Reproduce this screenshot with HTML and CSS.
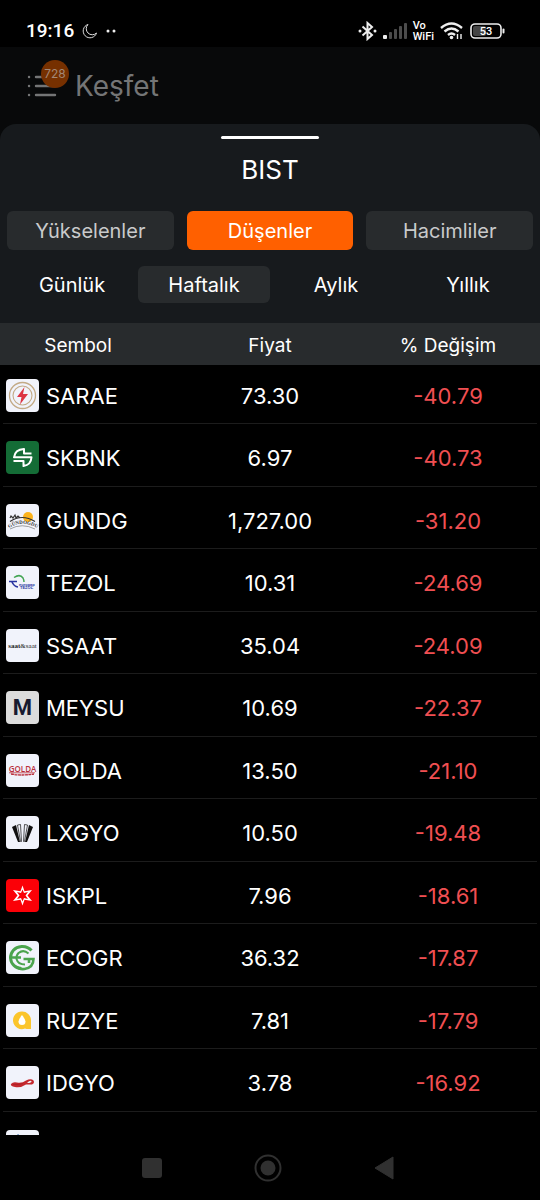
FILE: index.html
```
<!DOCTYPE html>
<html lang="tr">
<head>
  <meta charset="utf-8">
  <meta name="viewport" content="width=device-width, initial-scale=1">
  <title>Keşfet - BIST</title>
  <link rel="stylesheet" href="styles.css">
</head>
<body>
  <div class="statusBar">
    <span class="clock">19:16</span>
    <svg class="moon" width="16" height="16" viewBox="0 0 16 16"><path d="M6 1.500A6.800 6.800 0 1 0 14.500 10A6 6 0 0 1 6 1.500Z" fill="none" stroke="#ddd" stroke-width="1"/></svg>
    <svg width="10" height="4" viewBox="0 0 10 4" fill="#eee"><circle cx="2" cy="2" r="1.500"/><circle cx="8" cy="2" r="1.500"/></svg>

    <div class="statusIcons">
      <svg width="19" height="20" viewBox="0 0 19 20" fill="none" stroke="#eee" stroke-width="2"><path d="M4.500 5.500L14 14L9.500 18V2L14 6L4.500 14.500"/><circle cx="2" cy="10" r="1.500" fill="#eee" stroke="none"/><circle cx="17" cy="10" r="1.500" fill="#eee" stroke="none"/></svg>
      <svg width="24" height="16" viewBox="0 0 24 16" fill="#4c4c4c"><rect x="0" y="12" width="4" height="4" rx="1" fill="#eee"/><rect x="6" y="9" width="3" height="7" rx="1"/><rect x="11" y="6" width="3" height="10" rx="1"/><rect x="16" y="3" width="3" height="13" rx="1"/><rect x="21" y="0" width="3" height="16" rx="1"/></svg>
      <span class="voWifi">Vo<br>WiFi</span>
      <svg width="24" height="18" viewBox="0 0 24 18" fill="none" stroke="#eee" stroke-width="2.400"><path d="M1 6Q11.500 -3 22 6"/><path d="M4.500 9.500Q11.500 3.500 18.500 9.500"/><path d="M8 13Q11.500 10 15 13"/><circle cx="11.500" cy="15.500" r="1.800" fill="#eee" stroke="none"/><path d="M17.500 12V17M21 12V17" stroke-width="1.400"/></svg>
      <svg width="35" height="16" viewBox="0 0 35 16"><rect x="3" y="3" width="13" height="10" rx="2" fill="#444"/><rect x="1" y="1" width="30" height="14" rx="4" fill="none" stroke="#eee" stroke-width="1.600"/><rect x="32.500" y="5.500" width="2" height="5" rx="1" fill="#eee"/><text x="16" y="12" text-anchor="middle" font-family="Roboto" font-weight="500" font-size="11" fill="#fff">53</text></svg>
    </div>
  </div>

  <header class="appHeader">
    <button class="menuButton" aria-label="Menü">
      <svg width="30" height="24" viewBox="0 0 30 24" stroke="#747576" stroke-width="2.400" stroke-linecap="round"><path d="M9 3H28M9 12H28M9 21H28M2 3H2.100M2 12H2.100M2 21H2.100"/></svg>
      <span class="badge">728</span>
    </button>
    <h1>Keşfet</h1>
  </header>

  <main class="sheet">
    <div class="handle"></div>
    <h2>BIST</h2>

    <div class="tabs">
      <button>Yükselenler</button>
      <button class="active">Düşenler</button>
      <button>Hacimliler</button>
    </div>
    <div class="periods">
      <button>Günlük</button>
      <button class="active">Haftalık</button>
      <button>Aylık</button>
      <button>Yıllık</button>
    </div>

    <div class="list">
      <table>
        <thead>
          <tr><th>Sembol</th><th>Fiyat</th><th>% Değişim</th></tr>
        </thead>
        <tbody>
          <tr>
            <td><div class="symbol">
              <svg class="logo" viewBox="0 0 33 33"><g fill="none" stroke="#c3aa86"><circle cx="16.500" cy="16.500" r="13" stroke-width="1.300"/><circle cx="16.500" cy="16.500" r="9.500" stroke-width="1.100"/></g><path d="M18.500 8L11 18H15.500L14 25.500L22 15H17Z" fill="#dc3545"/></svg>
              SARAE</div></td>
            <td>73.30</td><td>-40.79</td>
          </tr>
          <tr>
            <td><div class="symbol">
              <svg class="logo green" viewBox="0 0 33 33" fill="none" stroke="#fff" stroke-width="2" stroke-linejoin="round"><path d="M25.500 12.500H18V8Q9 8.500 8 16.300H25.500Q25 24 17.500 25V20H7.500"/></svg>
              SKBNK</div></td>
            <td>6.97</td><td>-40.73</td>
          </tr>
          <tr>
            <td><div class="symbol">
              <svg class="logo" viewBox="0 0 33 33"><circle cx="22" cy="13" r="5" fill="#fcb31c"/><path d="M4 14L5 12L7 14L9 11L10 14L12 12L14 14M4 17.500Q16 9.500 29 17.500" fill="none" stroke="#333" stroke-width="1.200"/><path id="gundogduArc" d="M3 24Q16.500 15.500 31 24" fill="none"/><text font-family="Liberation Serif" font-size="5" font-weight="bold" fill="#333"><textPath href="#gundogduArc">GÜNDOĞDU</textPath></text><path d="M4 25Q16 18.500 29 25" fill="none" stroke="#777" stroke-width="0.700"/></svg>
              GUNDG</div></td>
            <td>1,727.00</td><td>-31.20</td>
          </tr>
          <tr>
            <td><div class="symbol">
              <svg class="logo" viewBox="0 0 33 33"><path d="M8 11.500Q14 7.500 17 12Q18 14 18 16" fill="none" stroke="#43a554" stroke-width="1.500"/><path d="M3 15.500H11M6 16Q8 20.500 12 21" fill="none" stroke="#2934a0" stroke-width="1.600"/><g font-family="Liberation Sans" font-weight="bold" font-size="4" fill="#2934a0"><text x="13" y="20">europap</text><text x="14" y="23">TEZOL</text></g></svg>
              TEZOL</div></td>
            <td>10.31</td><td>-24.69</td>
          </tr>
          <tr>
            <td><div class="symbol">
              <svg class="logo" viewBox="0 0 33 33"><text x="16.500" y="19" text-anchor="middle" font-family="Liberation Serif" font-size="7" fill="#222"><tspan font-weight="bold">saat</tspan>&amp;saat</text></svg>
              SSAAT</div></td>
            <td>35.04</td><td>-24.09</td>
          </tr>
          <tr>
            <td><div class="symbol">
              <svg class="logo gray" viewBox="0 0 33 33"><text x="16.500" y="24" text-anchor="middle" font-family="Roboto" font-weight="700" font-size="22" fill="#171a30">M</text></svg>
              MEYSU</div></td>
            <td>10.69</td><td>-22.37</td>
          </tr>
          <tr>
            <td><div class="symbol">
              <svg class="logo" viewBox="0 0 33 33"><text x="16.500" y="17.500" text-anchor="middle" font-family="Open Sans" font-size="8" font-weight="600" fill="#ba2f3b">GOLDA</text><path d="M3 18.800H29" stroke="#ba2f3b" stroke-width="0.800"/><path d="M5 20Q16 22 28 20" fill="none" stroke="#ba2f3b" stroke-width="1.300" stroke-dasharray="3 0.500"/></svg>
              GOLDA</div></td>
            <td>13.50</td><td>-21.10</td>
          </tr>
          <tr>
            <td><div class="symbol">
              <svg class="logo" viewBox="0 0 33 33" fill="#111"><path d="M6 11L10 9L14 26H12Z"/><path d="M27 11L23 9L19 26H21Z"/><path d="M11.500 9L14.500 8.500L15.500 25.500H14.500ZM21.500 9L18.500 8.500L17.500 25.500H18.500Z" fill="none" stroke="#111" stroke-width="0.700"/></svg>
              LXGYO</div></td>
            <td>10.50</td><td>-19.48</td>
          </tr>
          <tr>
            <td><div class="symbol">
              <svg class="logo red" viewBox="0 0 33 33"><path fill="#fff" fill-rule="evenodd" d="M16.500 6.500L18.500 12.300L26 11L21.500 16.500L26 22L18.500 20.700L16.500 26.500L14.500 20.700L7 22L11.500 16.500L7 11L14.500 12.300ZM16.500 10.500L15 14L11 13L13.500 16.500L11 20L15 19L16.500 22.500L18 19L22 20L19.500 16.500L22 13L18 14Z"/></svg>
              ISKPL</div></td>
            <td>7.96</td><td>-18.61</td>
          </tr>
          <tr>
            <td><div class="symbol">
              <svg class="logo" viewBox="0 0 33 33" fill="none" stroke="#4ba44d"><path d="M25.500 9.500Q21.500 5 15.500 5.500C8.500 6 4.500 11 4.500 17C5 23.500 10 27.500 15.500 27.500" stroke-width="3"/><path d="M22.500 12.500Q17.500 8 12.500 12Q10 14.500 10.500 18Q12 23.500 19 23.500" stroke-width="2"/><path d="M4 16.500H15M17.500 18H27.500Q27.500 26.500 18.500 28Q13 28.500 11 26M23 18V22" stroke-width="2.600"/></svg>
              ECOGR</div></td>
            <td>36.32</td><td>-17.87</td>
          </tr>
          <tr>
            <td><div class="symbol">
              <svg class="logo" viewBox="0 0 33 33"><path d="M16 7.500A8.800 8.800 0 1 0 19 24.500L20.500 25H25V16A8.800 8.800 0 0 0 16 7.500Z" fill="#fbc52b"/><path d="M16 11Q19.500 15.500 19.500 17.500A3.500 3.500 0 0 1 12.500 17.500Q12.500 15.500 16 11Z" fill="#fff"/></svg>
              RUZYE</div></td>
            <td>7.81</td><td>-17.79</td>
          </tr>
          <tr>
            <td><div class="symbol">
              <svg class="logo" viewBox="0 0 33 33"><path d="M5 18Q7 15.500 11 16.500Q16 17.500 20 14.500Q25 12 27.500 14.500Q29 17 26 18.500Q22 18.500 20 18.500Q15 22 9 21Q4 20 5 18Z" fill="#c4282e"/><path d="M21 17Q24 14 25.500 15.200Q26 17 21 17Z" fill="#f3f4fa"/><path d="M7 18.500Q12 19 17 17.500" fill="none" stroke="#a51e25" stroke-width="0.600"/></svg>
              IDGYO</div></td>
            <td>3.78</td><td>-16.92</td>
          </tr>
          <tr>
            <td><div class="symbol">
              <svg class="logo" viewBox="0 0 33 33"><path d="M12 4L17 9H8Z" fill="#28639f"/></svg>
            </div></td>
            <td></td><td></td>
          </tr>
        </tbody>
      </table>
    </div>
  </main>

  <nav class="navBar">
    <button aria-label="Son uygulamalar"><svg width="28" height="28" viewBox="0 0 28 28"><rect x="4" y="4" width="20" height="20" rx="3" fill="#303030"/></svg></button>
    <button aria-label="Ana ekran"><svg width="28" height="28" viewBox="0 0 28 28"><circle cx="14" cy="14" r="12.500" fill="none" stroke="#303030" stroke-width="2"/><circle cx="14" cy="14" r="7.500" fill="#303030"/></svg></button>
    <button aria-label="Geri"><svg width="28" height="28" viewBox="0 0 28 28"><path d="M5 14L23 3V25Z" fill="#303030" stroke="#303030" stroke-linejoin="round"/></svg></button>
  </nav>
</body>
</html>
```
FILE: styles.css
```
*{
  box-sizing: border-box;
  margin: 0;
  padding: 0;
}

body{
  display: flex;
  flex-direction: column;
  height: 100vh;
  background-color: #000;
  color: #fff;
  font-family: Inter, sans-serif;
}

button{
  border: none;
  background: none;
  color: inherit;
  font-family: inherit;
}

svg{
  display: block;
}

/* phone status bar */
.statusBar{
  display: flex;
  align-items: center;
  height: 47px;
  padding: 14px 35px 0 26px;
  font-family: Roboto, sans-serif;
}
.clock{
  font-size: 19px;
  font-weight: 500;
}
.moon{
  margin: 0 8px;
}
.statusIcons{
  display: flex;
  align-items: center;
  gap: 6px;
  margin-left: auto;
}
.voWifi{
  font-size: 11px;
  font-weight: 500;
  line-height: 11px;
}

/* dimmed page behind the sheet */
.appHeader{
  display: flex;
  align-items: center;
  gap: 18px;
  height: 77px;
  padding: 0 27px;
  background-color: #08090a;
}
.appHeader h1{
  font-size: 28px;
  font-weight: 400;
  color: #747576;
}
.menuButton{
  position: relative;
}
.badge{
  position: absolute;
  top: -14px;
  left: 14px;
  width: 28px;
  height: 28px;
  border-radius: 50%;
  background-color: #763000;
  color: #a38877;
  font-size: 12px;
  line-height: 28px;
}

.sheet{
  display: flex;
  flex-direction: column;
  flex: 1;
  min-height: 0;
  border-radius: 16px 16px 0 0;
  background-color: #171a1d;
  box-shadow: 0 -16px 0 16px #08090a;
  clip-path: inset(-1px 0 0 0);
}
.handle{
  width: 18%;
  height: 3px;
  margin: 12px auto 0;
  border-radius: 2px;
  background-color: #fff;
}
.sheet h2{
  margin-top: 15px;
  font-size: 26px;
  font-weight: 400;
  line-height: 32px;
  text-align: center;
}

.tabs{
  display: flex;
  gap: 13px;
  margin-top: 25px;
  padding: 0 7px;
}
.tabs button{
  flex: 1;
  height: 39px;
  border-radius: 6px;
  background-color: #282b2d;
  color: #c9cacb;
  font-size: 20px;
}
.tabs .active{
  background-color: #ff6000;
  color: #fff;
}

.periods{
  display: flex;
  margin: 16px 0 20px;
  padding: 0 6px;
}
.periods button{
  flex: 1;
  height: 37px;
  border-radius: 6px;
  font-size: 20px;
}
.periods .active{
  background-color: #282b2d;
}

.list{
  flex: 1;
  min-height: 0;
  padding: 0 3px;
  overflow: hidden;
  background-color: #000;
}
table{
  width: 100%;
  border-collapse: separate;
  border-spacing: 0;
  table-layout: fixed;
}
th{
  height: 42px;
  padding-top: 2px;
  background-color: #282b2d;
  font-size: 19px;
  font-weight: 400;
}
/* header stripe runs to the edges, row lines do not */
th:first-child{
  padding-right: 28px;
  box-shadow: -3px 0 0 #282b2d;
}
th:last-child{
  box-shadow: 3px 0 0 #282b2d;
}
td{
  height: 63px;
  padding: 17px 0 10px;
  border-bottom: 1px solid #1c1c1c;
  font-size: 22px;
  line-height: 35px;
  text-align: center;
}
tr:nth-child(odd) td{
  height: 62px;
  padding-bottom: 9px;
}
tr:first-child td{
  height: 59px;
  padding-top: 14px;
}
td:last-child{
  color: #f04f52;
}

.symbol{
  display: flex;
  gap: 7px;
  padding-left: 3px;
}
.logo{
  width: 33px;
  height: 33px;
  border-radius: 4px;
  background-color: #f1f3fb;
}
.logo.green{
  background-color: #146c36;
}
.logo.gray{
  background-color: #dcdcdc;
}
.logo.red{
  background-color: #fb0007;
}

.navBar{
  display: flex;
  justify-content: center;
  gap: 88px;
  height: 65px;
  padding-right: 4px;
}
```
